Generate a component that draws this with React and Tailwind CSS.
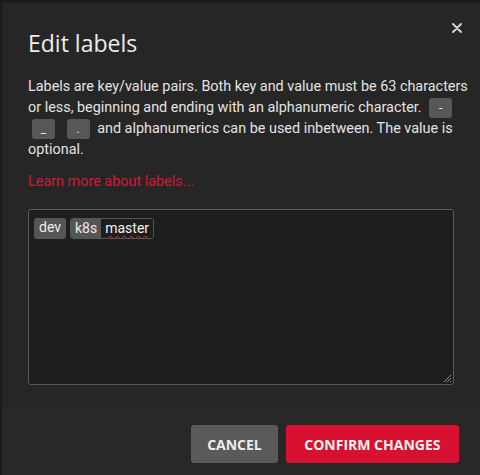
import React from "react";

function Chip({ children }) {
  return (
    <span className="inline-flex h-[20px] w-[23px] items-center justify-center rounded-[3px] bg-[#575757] align-middle text-[12px] leading-none text-[#e5e5e5] mx-[4px]">
      {children}
    </span>
  );
}

export default function App() {
  return (
    <div className="h-[475px] w-[480px] overflow-hidden bg-[#1b1b1b] pt-[3px] pl-[2px]" style={{ fontFamily: "Roboto, sans-serif" }}>
      <div className="flex h-[472px] flex-col bg-[#262626]">
        <div className="relative flex-1 px-[26px]">
          <button className="absolute right-[15px] top-[17px] flex h-[16px] w-[16px] items-center justify-center text-[#d8d8d8]">
            <svg width="10" height="10" viewBox="0 0 10 10">
              <path d="M1 1L9 9M9 1L1 9" stroke="currentColor" strokeWidth="1.8" strokeLinecap="round" />
            </svg>
          </button>
          <h2 className="pt-[25px] text-[23px] leading-[30px] text-[#ececec]" style={{ fontFamily: "'Open Sans', sans-serif" }}>
            Edit labels
          </h2>
          <p className="-mr-[14px] mt-[18px] whitespace-nowrap text-[14.4px] leading-[21px] text-[#e3e3e3]">
            Labels are key/value pairs. Both key and value must be 63 characters
            <br />
            or less, beginning and ending with an alphanumeric character.{" "}
            <Chip>-</Chip>
            <br />
            <Chip>_</Chip> <Chip>.</Chip> and alphanumerics can be used inbetween. The value is
            <br />
            optional.
          </p>
          <a className="mt-[11px] block text-[14.4px] leading-[21px] text-[#d01a3a]">Learn more about labels...</a>
          <div className="relative mt-[17px] h-[176px] rounded-[3px] border border-[#5a5a5a] bg-[#1e1e1e] px-[5px] pt-[8px]">
            <div className="flex gap-[4px] text-[14px] leading-[19px]">
              <span className="rounded-[3px] bg-[#555555] px-[5px] text-[#ececec]">dev</span>
              <span className="flex overflow-hidden rounded-[3px] border border-[#555555]">
                <span className="bg-[#555555] px-[4px] text-[#ececec]">k8s</span>
                <span className="bg-[#1e1e1e] px-[4px] text-[#f2f2f2] underline decoration-wavy decoration-[#e0243f] decoration-1 underline-offset-[2px]">master</span>
              </span>
            </div>
            <svg className="absolute bottom-[1px] right-[1px]" width="9" height="9" viewBox="0 0 9 9">
              <path d="M8 1L1 8M8 4L4 8M8 7L7 8" stroke="#8a8a8a" strokeWidth="1" />
            </svg>
          </div>
        </div>
        <div className="flex h-[68px] items-start justify-end gap-[8px] bg-[#282828] pl-[20px] pr-[21px] pt-[18px]">
          <button className="h-[38px] rounded-[3px] bg-[#5a5a5a] px-[16px] text-[14px] font-bold text-[#ededed]" style={{ fontFamily: "'Open Sans', sans-serif" }}>
            CANCEL
          </button>
          <button className="h-[38px] rounded-[3px] bg-[#d7112f] px-[18.5px] text-[14px] font-bold text-[#f3f3f3]" style={{ fontFamily: "'Open Sans', sans-serif" }}>
            CONFIRM CHANGES
          </button>
        </div>
      </div>
    </div>
  );
}
